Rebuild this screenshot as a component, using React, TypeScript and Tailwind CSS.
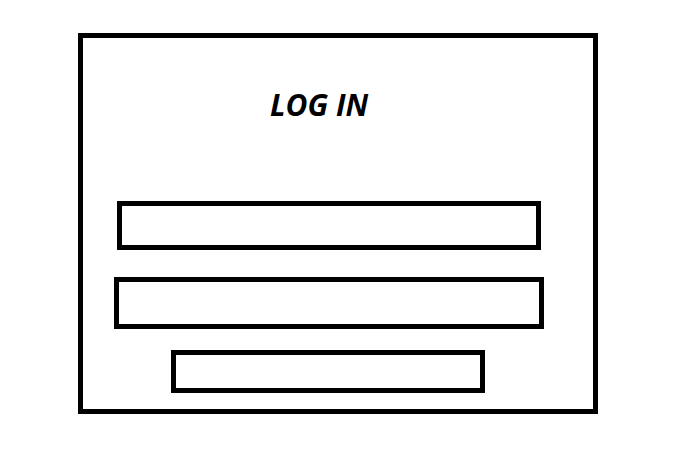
export default function App() {
  return (
    <div className="w-[688px] h-[468px] bg-white pt-[33px] pl-[78px]">
      <div className="w-[520px] h-[381px] border-[5px] border-black flex flex-col items-start">
        <h1 className="ml-[187px] mt-[50px] h-[34px] text-[30px] leading-[34px] font-bold italic text-black font-['Open_Sans',sans-serif]">
          LOG IN
        </h1>
        <input
          type="text"
          aria-label="Username"
          className="ml-[34px] mt-[79px] w-[424px] h-[49px] border-[5px] border-black bg-white outline-none"
        />
        <input
          type="password"
          aria-label="Password"
          className="ml-[31px] mt-[27px] w-[430px] h-[52px] border-[5px] border-black bg-white outline-none"
        />
        <button
          type="button"
          aria-label="Log in"
          className="ml-[88px] mt-[21px] w-[314px] h-[43px] border-[5px] border-black bg-white"
        />
      </div>
    </div>
  );
}
